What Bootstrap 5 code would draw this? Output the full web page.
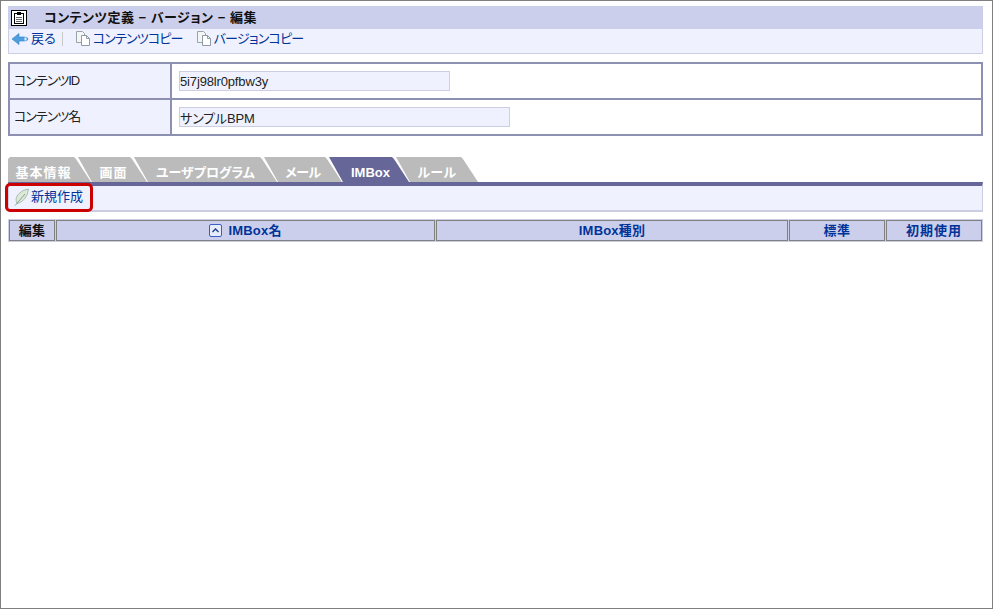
<!DOCTYPE html>
<html lang="ja">
<head>
  <meta charset="UTF-8">
  <title>コンテンツ定義 - バージョン - 編集</title>
  <meta name="viewport" content="width=device-width, initial-scale=1">
  <link href="https://cdn.jsdelivr.net/npm/bootstrap@5.3.0/dist/css/bootstrap.min.css" rel="stylesheet">
  <style>
    html, body { height: 100%; background: #fff; }
    body { font: 13px/1.2 "Liberation Sans", "Noto Sans CJK JP", sans-serif; font-feature-settings: "palt"; color: #222; }
    a { text-decoration: none; color: #003399; }

    .marco { height: 609px; border: 1px solid #7f7f7f; padding: 5px 9px 0 7px; }

    .titulo { height: 23px; background: #cccfeb; padding-left: 2px; font-weight: 700; color: #111; letter-spacing: .5px; }
    .titulo svg { margin-right: 16px; }
    .herramientas { height: 25px; background: #eff2fe; border: 1px solid #ccceE4; border-top: 0; padding: 0 0 5px 2px; }
    .herramientas a { display: flex; align-items: center; gap: 1px; }
    .copia { letter-spacing: -.8px; }
    .sep-v { width: 1px; height: 14px; background: #c8c8c8; margin: 0 12px 0 6px; }
    .espacio-copia { margin-right: 13px; }

    .ficha { margin: 8px 0 0 0; border-collapse: collapse; width: 975px; height: 74px; }
    .ficha th, .ficha td { border: 2px solid #8e90b2; font-weight: 400; }
    .ficha th { width: 162px; background: #eff2fe; padding: 0 0 0 4px; letter-spacing: -1px; }
    .ficha td { padding-left: 7px; }
    .caja { display: block; height: 20px; border: 1px solid #ccceE4; background: #eff2fe; padding: 0; font: inherit; color: #222; outline: 0; letter-spacing: -.15px; }
    .caja-id { width: 271px; }
    .caja-nombre { width: 331px; }

    .pestanas { margin-top: 21px; height: 25px; }
    .pestana { height: 25px; background: #bbb; color: #fff; font-weight: 700; margin-left: -13px; padding: 7px 0 0; line-height: 18px; text-align: center;
      clip-path: polygon(0 0, calc(100% - 17px) 0, calc(100% - 15px) 2px, 100% 100%, 14px 100%); }
    .pestana:first-child { margin-left: 0; clip-path: polygon(0 100%, 0 2px, 2px 0, calc(100% - 17px) 0, calc(100% - 15px) 2px, 100% 100%); }
    .pestana.activa { background: #666699; position: relative; }
    .tab-basico { width: 83px; padding-right: 12px; letter-spacing: 1px; }
    .tab-pantalla { width: 69px; padding-left: 2px; letter-spacing: 1px; }
    .tab-programa { width: 143px; }
    .tab-correo { width: 78px; letter-spacing: -.5px; }
    .tab-imbox { width: 80px; padding-left: 3px; }
    .tab-regla { width: 82px; letter-spacing: .4px; }

    .barra { height: 30px; background: #eff2fe; border-top: 4px solid #666699; border-left: 1px solid #ccceE4; border-right: 1px solid #ccceE4; border-bottom: 2px solid #ccceE4; padding-left: 4px; position: relative; }
    .barra a { display: flex; align-items: center; gap: 1px; height: 22px; }
    .marca-roja { position: absolute; left: -4px; top: -3px; width: 88px; height: 29px; border: 3px solid #cc0000; border-radius: 5px; }

    .cabecera { margin: 8px 0 0 1px; width: 973px; height: 21px; gap: 1px; }
    .cabecera div { background: #cccfeb; border: 1px solid #808080; outline: 1px solid #ccceE4; font-weight: 700; color: #003399; display: flex; align-items: center; justify-content: center; gap: 6px; letter-spacing: .2px; }
    .cabecera .col-edit { width: 46px; color: #111; }
    .cabecera .col-nom { width: 379px; }
    .cabecera .col-tipo { width: 352px; }
    .cabecera .col-est { width: 96px; letter-spacing: .6px; }
    .cabecera .col-ini { width: 96px; letter-spacing: 1px; }
  </style>
</head>
<body>
<div class="marco">
  <!-- Titulo -->
  <div class="titulo d-flex align-items-center">
    <svg width="18" height="18" viewBox="0 0 18 18"><rect x="1.500" y="1.500" width="15" height="15" fill="#fff" stroke="#000"/><rect x="4.500" y="4.500" width="9" height="10" fill="#fff" stroke="#000"/><rect x="7" y="3" width="4" height="3" fill="#000"/><path d="M6 8.500h6M6 10.500h6M6 12.500h6" stroke="#666"/></svg>
    <span>コンテンツ定義 − バージョン − 編集</span>
  </div>
  <div class="herramientas d-flex align-items-center">
    <a href="#"><svg width="19" height="14" viewBox="0 0 19 14"><path d="M1 7 8 1.500V5h5q4 0 4 2t-4 2H8v3.500z" fill="#4f9fe0" stroke="#2f7fc4" stroke-width=".6"/><path d="M13.500 5.500h2v3h-2z" fill="#e4f2fc"/></svg>戻る</a>
    <span class="sep-v"></span>
    <a href="#" class="copia espacio-copia"><svg width="17" height="17" viewBox="0 0 17 17"><path d="M1.500 1.500h6l2 2v9h-8z" fill="#f4f6f6" stroke="#98a4a8"/><path d="M6.500 5.500h5l3 3v7h-8z" fill="#fff" stroke="#8d9ca2"/><path d="M11.500 5.500v3h3" fill="none" stroke="#8d9ca2"/></svg>コンテンツコピー</a>
    <a href="#" class="copia"><svg width="17" height="17" viewBox="0 0 17 17"><path d="M1.500 1.500h6l2 2v9h-8z" fill="#f4f6f6" stroke="#98a4a8"/><path d="M6.500 5.500h5l3 3v7h-8z" fill="#fff" stroke="#8d9ca2"/><path d="M11.500 5.500v3h3" fill="none" stroke="#8d9ca2"/></svg>バージョンコピー</a>
  </div>

  <!-- Datos de la contenido -->
  <table class="ficha">
    <tr><th>コンテンツID</th><td><input class="caja caja-id" type="text" value="5i7j98lr0pfbw3y"></td></tr>
    <tr><th>コンテンツ名</th><td><input class="caja caja-nombre" type="text" value="サンプルBPM"></td></tr>
  </table>

  <!-- Pestanas -->
  <div class="pestanas d-flex">
    <div class="pestana tab-basico">基本情報</div>
    <div class="pestana tab-pantalla">画面</div>
    <div class="pestana tab-programa">ユーザプログラム</div>
    <div class="pestana tab-correo">メール</div>
    <div class="pestana activa tab-imbox">IMBox</div>
    <div class="pestana tab-regla">ルール</div>
  </div>
  <div class="barra">
    <a href="#"><svg width="17" height="19" viewBox="0 0 17 19"><path d="M1.500 18 4 15.500q-2.500-5 1.500-9.500t10-5q-.5 6-4 10t-7.500 4.500" fill="#dce8d8" stroke="#9db4a4" stroke-width=".8"/><path d="M3 16.500 12 6" stroke="#8aa594" fill="none"/></svg>新規作成</a>
    <span class="marca-roja"></span>
  </div>

  <!-- Cabecera de la lista -->
  <div class="cabecera d-flex">
    <div class="col-edit">編集</div>
    <div class="col-nom"><svg width="13" height="13" viewBox="0 0 13 13"><rect x=".5" y=".5" width="12" height="12" rx="1.500" fill="#e6ecfb" stroke="#3a5fc0"/><path d="M3.500 8 6.500 5l3 3" fill="none" stroke="#1c3a90" stroke-width="1.300"/></svg>IMBox名</div>
    <div class="col-tipo">IMBox種別</div>
    <div class="col-est">標準</div>
    <div class="col-ini">初期使用</div>
  </div>
</div>
<script src="https://cdn.jsdelivr.net/npm/bootstrap@5.3.0/dist/js/bootstrap.bundle.min.js"></script>
</body>
</html>
